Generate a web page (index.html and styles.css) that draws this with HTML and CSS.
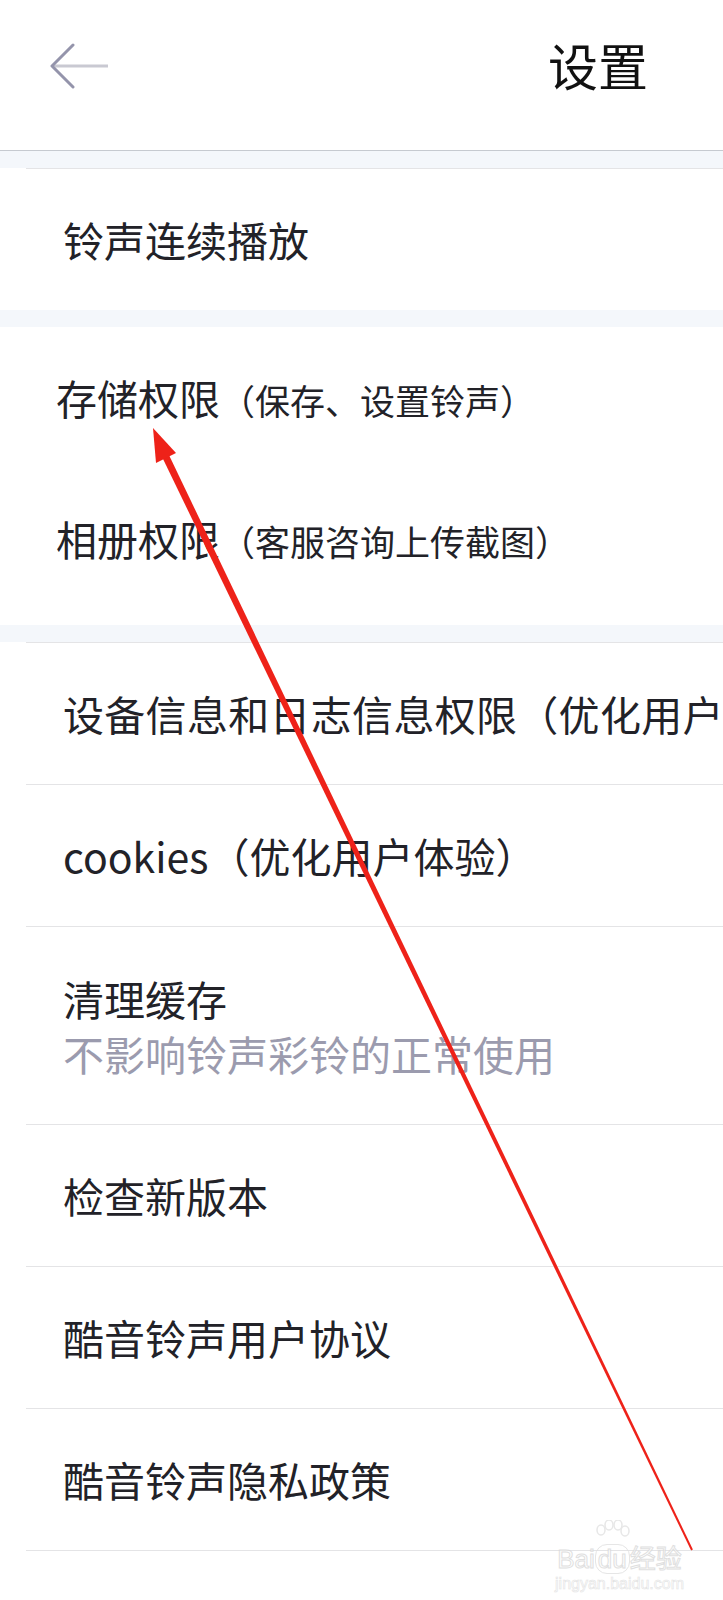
FILE: index.html
```html
<!DOCTYPE html>
<html lang="zh-CN">

<head>
    <meta charset="UTF-8">
    <meta name="viewport" content="width=device-width, initial-scale=1.0">
    <link rel="stylesheet" href="styles.css">
    <title>设置</title>
</head>

<body>
    <div class="page">
        <header class="topbar">
            <svg class="back" width="60" height="46" viewBox="0 0 60 46">
                <line x1="4" y1="23" x2="59" y2="23" stroke="#c9c9d2" stroke-width="3" />
                <polyline points="24,2 3,23 24,44" fill="none" stroke="#9494ab" stroke-width="3" stroke-linecap="round" stroke-linejoin="round" />
            </svg>
            <h1 class="title">设置</h1>
        </header>

        <div class="gap"></div>
        <section class="group">
            <div class="row line">铃声连续播放</div>
        </section>

        <div class="gap"></div>
        <section class="group group-perm">
            <div class="row indent">存储权限<span class="note">（保存、设置铃声）</span></div>
            <div class="row indent">相册权限<span class="note">（客服咨询上传截图）</span></div>
        </section>

        <div class="gap"></div>
        <section class="group">
            <div class="row line wide">设备信息和日志信息权限（优化用户</div>
            <div class="row line">cookies（优化用户体验）</div>
            <div class="row line tall">
                <div>清理缓存</div>
                <div class="sub">不影响铃声彩铃的正常使用</div>
            </div>
            <div class="row line">检查新版本</div>
            <div class="row line">酷音铃声用户协议</div>
            <div class="row line last">酷音铃声隐私政策</div>
        </section>

        <!-- annotation drawn over the screenshot -->
        <svg class="mark" width="723" height="1600" viewBox="0 0 723 1600">
            <polygon points="169.2,455.5 692.9,1549.6 691.1,1550.4 162.8,458.5" fill="#ee2219" />
            <polygon points="153,428 176,453 156,463" fill="#ee2219" />
        </svg>

        <div class="watermark">
            <svg class="paw" width="40" height="30" viewBox="0 0 40 30">
                <g fill="none" stroke="#e2e2e2" stroke-width="1.5">
                    <ellipse cx="9" cy="10" rx="4" ry="5" />
                    <ellipse cx="17" cy="5" rx="4" ry="5" />
                    <ellipse cx="26" cy="5" rx="4" ry="5" />
                    <ellipse cx="33" cy="11" rx="4" ry="5" />
                </g>
            </svg>
            <div class="wm-name">Bai<span class="wm-du">du</span>经验</div>
            <div class="wm-url">jingyan.baidu.com</div>
        </div>
    </div>
</body>

</html>
```

FILE: styles.css
```css
body {
    margin: 0;
    background-color: #fff;
    font-family: "Noto Sans CJK SC", "Noto Sans", sans-serif;
    color: #222228;
}

.page {
    position: relative;
    width: 723px;
    height: 1600px;
    overflow: hidden;
}

.topbar {
    display: flex;
    justify-content: space-between;
    align-items: center;
    height: 132px;
    padding: 0 75px 18px 49px;
    border-bottom: 1px solid #c6cad0;
}

.back {
    display: block;
}

.title {
    margin: 0 0 4px;
    font-size: 50px;
    font-weight: 400;
    color: #111;
    line-height: 1;
}

.gap {
    height: 17px;
    background-color: #f4f7fb;
}

.group {
    background-color: #fff;
}

.group-perm {
    padding-bottom: 16px;
}

.row {
    display: flex;
    flex-direction: column;
    justify-content: center;
    height: 141px;
    padding-left: 63px;
    font-size: 41px;
    line-height: 55px;
    white-space: nowrap;
    overflow: hidden;
}

.row.indent {
    padding-left: 56px;
    display: block;
    line-height: 141px;
}

.row.line {
    margin-left: 26px;
    padding-left: 37px;
    border-top: 1px solid #e4e4e6;
}

.row.wide {
    letter-spacing: 0.3px;
}

.row.tall {
    height: 197px;
}

.row.last {
    border-bottom: 1px solid #e4e4e6;
}

.note {
    font-size: 35px;
}

.sub {
    color: #9b9bae;
}

.mark {
    position: absolute;
    top: 0;
    left: 0;
    pointer-events: none;
}

.watermark {
    position: absolute;
    left: 552px;
    top: 1520px;
    width: 135px;
    text-align: center;
    font-family: "Liberation Sans", "Noto Sans CJK SC", sans-serif;
    color: #fff;
    opacity: 0.8;
}

.paw {
    display: block;
    margin: 0 auto -6px 40px;
}

.wm-name {
    font-size: 26px;
    line-height: 28px;
    -webkit-text-stroke: 1px #d8d8d8;
}

.wm-du {
    display: inline-block;
    border: 1px solid #e0e0e0;
    border-radius: 12px;
    padding: 0 2px;
}

.wm-url {
    font-size: 16px;
    line-height: 20px;
    -webkit-text-stroke: 0.6px #dcdcdc;
}
```
